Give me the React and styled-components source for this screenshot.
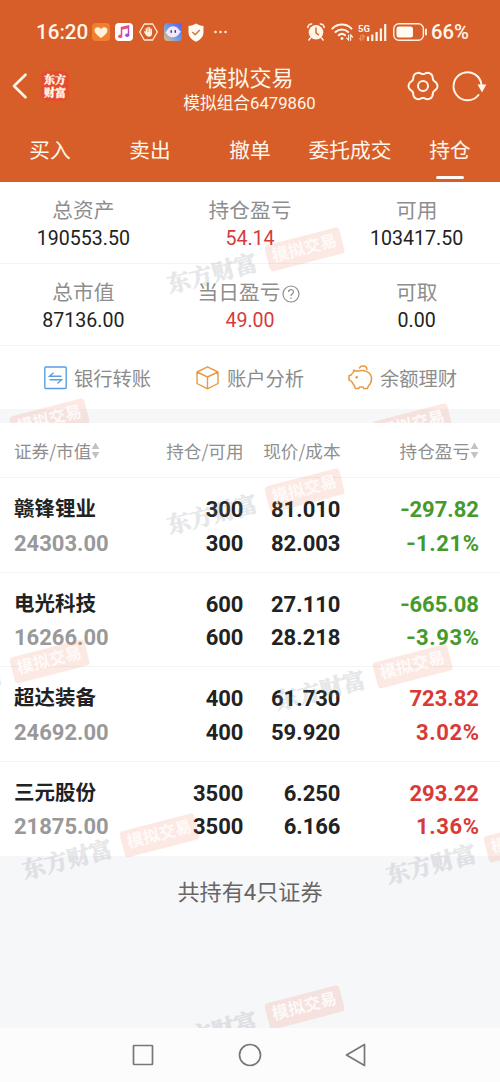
import React from "react";
import styled, { createGlobalStyle } from "styled-components";

const sans = `Roboto, "Noto Sans CJK SC", sans-serif`;

const GlobalStyle = createGlobalStyle`
  * { box-sizing: border-box; }
  body { margin: 0; background: #fff; }
`;

const Screen = styled.div`
  width: 500px;
  height: 1082px;
  display: flex;
  flex-direction: column;
  overflow: hidden;
  font-family: ${sans};
  color: #222;
  white-space: nowrap;
`;

const Header = styled.header`
  height: 182px;
  flex: none;
  display: flex;
  flex-direction: column;
  background: #d75e28;
  color: #fff6ea;
`;

const StatusBar = styled.div`
  height: 64px;
  padding: 0 33px 0 36px;
  display: flex;
  align-items: center;
  justify-content: space-between;
`;

const StatusGroup = styled.div`
  display: flex;
  align-items: center;
  gap: ${(p) => p.$gap}px;
`;

const StatusText = styled.span`
  font-size: ${(p) => p.$size}px;
  line-height: 24px;
  font-weight: 500;
  width: ${(p) => p.$width}px;
`;

const TitleBar = styled.div`
  height: 56px;
  padding: 0 14px 0 11px;
  display: grid;
  grid-template-columns: 90px 1fr 79px;
  align-items: center;
`;

const BrandSide = styled.div`
  display: flex;
  align-items: center;
  gap: 14px;
  padding-bottom: 13px;
`;

const Brand = styled.div`
  width: 28px;
  height: 30px;
  border-radius: 6px;
  background: #e54c2b;
  display: flex;
  flex-direction: column;
  align-items: center;
  justify-content: center;
  font: 900 11px/13px "Noto Serif CJK SC", "Noto Sans CJK SC", serif;
  -webkit-text-stroke: 0.3px currentColor;
`;

const Titles = styled.div`
  display: flex;
  flex-direction: column;
  align-items: center;
  padding: 0 9px 3px 0;
`;

const Title = styled.h1`
  margin: 0;
  font-size: 22px;
  line-height: 27px;
  font-weight: 400;
`;

const Subtitle = styled.div`
  font-size: 16.7px;
  line-height: 24px;
`;

const Tools = styled.div`
  display: flex;
  gap: 13px;
  padding-bottom: 13px;
`;

const Tabs = styled.nav`
  height: 62px;
  display: grid;
  grid-template-columns: repeat(5, 1fr);
`;

const Tab = styled.div`
  display: flex;
  flex-direction: column;
  align-items: center;
  padding-top: 15px;
  font-size: 20.7px;
  line-height: 32px;
  &::after {
    content: "";
    width: 28px;
    height: 3px;
    margin-top: 9px;
    border-radius: 2px;
    background: ${(p) => (p.$active ? "#fffaf3" : "transparent")};
  }
`;

const Summary = styled.section`
  position: relative;
  height: 241px;
  flex: none;
  overflow: hidden;
  background: #fff;
`;

const StatRow = styled.div`
  height: 82px;
  padding-top: 16px;
  display: grid;
  grid-template-columns: repeat(3, 1fr);
  border-bottom: 1px solid #f4f4f4;
`;

const Stat = styled.div`
  display: flex;
  flex-direction: column;
  align-items: center;
`;

const StatLabel = styled.div`
  display: flex;
  align-items: center;
  gap: 2px;
  font-size: 20.7px;
  line-height: 27px;
  color: #8e8e8e;
`;

const HelpIcon = styled.svg`
  display: block;
  margin-right: 2px;
`;

const StatValue = styled.div`
  font-size: 19.6px;
  line-height: 27px;
  color: ${(p) => (p.$red ? "#d23c3c" : "#222")};
`;

const Actions = styled.div`
  height: 63px;
  padding: 0 43px;
  display: flex;
  align-items: center;
  justify-content: space-between;
`;

const Action = styled.div`
  display: flex;
  align-items: center;
  gap: 7px;
  font-size: 19.3px;
  color: #8c8c8c;
`;

const Band = styled.div`
  height: 14px;
  background: #f6f7f9;
`;

const Holdings = styled.main`
  position: relative;
  flex: 1;
  overflow: hidden;
  background: #f6f7f9;
`;

const columns = "140px 89.5px 97px 138.500px";

const TableHead = styled.div`
  height: 55px;
  padding: 0 21px 0 14px;
  display: grid;
  grid-template-columns: ${columns};
  align-items: center;
  background: #fff;
  border-bottom: 1px solid #f4f4f4;
  font-family: "Noto Sans CJK SC", sans-serif;
  font-size: 17.6px;
  color: #8f8f8f;
`;

const HeadCell = styled.div`
  display: flex;
  align-items: center;
  justify-content: ${(p) => (p.$left ? "flex-start" : "flex-end")};
`;

const Row = styled.div`
  height: 94.5px;
  padding: 15px 21px 0 14px;
  display: grid;
  grid-template-columns: ${columns};
  background: #fff;
  border-bottom: 1px solid #f4f4f4;
  &:last-of-type { border-bottom: 0; }
`;

const Cell = styled.div`
  display: flex;
  flex-direction: column;
  align-items: ${(p) => (p.$left ? "flex-start" : "flex-end")};
  font-size: 22px;
  line-height: 33.5px;
  font-weight: 700;
  color: ${(p) => p.$color || "#222"};
`;

const StockName = styled.span`
  font-size: 20.5px;
  font-weight: 700;
`;

const MarketValue = styled.span`
  color: #999;
`;

const Count = styled.footer`
  padding-top: 20px;
  text-align: center;
  font-size: 22.1px;
  line-height: 32px;
  color: #666;
`;

const Mark = styled.div`
  position: absolute;
  left: ${(p) => p.$x}px;
  top: ${(p) => p.$y}px;
  width: 184px;
  height: 30px;
  margin: -15px 0 0 -145px;
  display: flex;
  align-items: center;
  justify-content: space-between;
  transform-origin: 145px 15px;
  transform: rotate(-14.5deg);
  pointer-events: none;
`;

const MarkName = styled.span`
  padding-left: 4px;
  font: 700 23px/30px "Noto Serif CJK SC", "Noto Sans CJK SC", serif;
  color: rgb(125, 130, 140);
  -webkit-text-stroke: 0.8px currentColor;
  opacity: 0.19;
`;

const MarkTag = styled.span`
  width: 77px;
  height: 27px;
  border-radius: 4px;
  background: rgba(240, 105, 65, 0.15);
  color: rgba(255, 255, 255, 0.82);
  font-size: 16.5px;
  line-height: 26px;
  font-weight: 700;
  text-align: center;
`;

const NavBar = styled.nav`
  height: 54px;
  flex: none;
  padding: 0 133px 0 132px;
  display: flex;
  align-items: center;
  justify-content: space-between;
  background: #fcfcfc;
`;

const Icon = styled.svg`
  display: block;
  flex: none;
  overflow: visible;
`;

const gearPath =
  Array.from({ length: 96 }, (_, i) => {
    const a = (i / 96) * Math.PI * 2;
    const r = 13.3 + 1.25 * Math.cos(6 * a) - 0.15 * Math.cos(12 * a);
    return `${i ? "L" : "M"}${(16 + r * Math.cos(a)).toFixed(2)} ${(16 + r * Math.sin(a)).toFixed(2)}`;
  }).join("") + "Z";

const Watermark = ({ x, y }) => (
  <Mark $x={x} $y={y}>
    <MarkName>东方财富</MarkName>
    <MarkTag>模拟交易</MarkTag>
  </Mark>
);

const Sort = () => (
  <Icon width="9" height="17" viewBox="0 0 9 17" fill="#c2c2c2">
    <path d="M4.5 .5 8.300 7H.7ZM4.5 16.500 .7 10h7.600Z" />
  </Icon>
);

const AppIcons = () => (
  <>
    <Icon width="18" height="18" viewBox="0 0 18 18">
      <rect width="18" height="18" rx="4" fill="#f08030" />
      <path d="M9 15C5 12 2.5 10 2.5 7.2 2.5 4 6.7 3 9 6c2.300-3 6.500-2 6.500 1.200C15.500 10 13 12 9 15Z" fill="#fff0d8" />
    </Icon>
    <Icon width="18" height="18" viewBox="0 0 18 18">
      <defs>
        <linearGradient id="note" x1="0" y1="0" x2="1" y2="1">
          <stop offset="0" stopColor="#f04a6a" />
          <stop offset="1" stopColor="#a04ae0" />
        </linearGradient>
      </defs>
      <rect width="18" height="18" rx="4" fill="#fff" />
      <path d="M6.500 13V4.500L13.500 3v9" fill="none" stroke="url(#note)" strokeWidth="1.500" />
      <path d="M6.500 5.800 13.500 4.300" stroke="#ee4d70" strokeWidth="2" />
      <ellipse cx="5.200" cy="13.400" rx="2.200" ry="1.800" fill="#f0577a" />
      <ellipse cx="12.200" cy="12.300" rx="2.200" ry="1.800" fill="#a44ce0" />
    </Icon>
    <Icon width="19" height="18" viewBox="0 0 19 18">
      <path d="M5.300 1h8.400l4.600 8-4.600 8H5.300L.7 9Z" fill="none" stroke="#ffeedb" strokeWidth="1.300" strokeLinejoin="round" />
      <path d="M7.300 10V5.700M9 9V4.500M10.700 9V5M12.300 10V6.500M5.700 8.800l1.900 3" fill="none" stroke="#ffeedb" strokeWidth="1.400" strokeLinecap="round" />
      <path d="M6.600 9h6.400v1.500c0 2-1.200 3.300-3 3.300s-2.500-1.300-3.400-2.800Z" fill="#ffeedb" />
    </Icon>
    <Icon width="18" height="18" viewBox="0 0 18 18">
      <defs>
        <linearGradient id="pal" x1="1" y1="0" x2="0" y2="1">
          <stop offset="0" stopColor="#6557e8" />
          <stop offset=".55" stopColor="#6c9ee8" />
          <stop offset="1" stopColor="#f5ba78" />
        </linearGradient>
      </defs>
      <rect width="18" height="18" rx="4" fill="url(#pal)" />
      <path d="M1.500 9.500C3.500 8 4 3.300 9 3.300S14.500 7.300 17 8.500C15.500 10 14 14.300 9 14.300S3.500 11.500 1.500 9.500Z" fill="#f1e8fc" />
      <path d="M7.200 7.800v1.500M11.300 7.800v1.500" stroke="#37395e" strokeWidth="1.400" strokeLinecap="round" />
    </Icon>
    <Icon width="18" height="19" viewBox="0 0 18 19">
      <path d="M9 .5c2.500 1.700 5 2.300 7.500 2.500v6c0 5-3.500 8-7.500 9.700C5 17 1.500 14 1.500 9V3C4 2.800 6.500 2.200 9 .5Z" fill="#fffaf2" />
      <path d="m5.300 9 2.800 2.800L12.800 7" fill="none" stroke="#c47a48" strokeWidth="1.400" />
    </Icon>
    <Icon width="18" height="4" viewBox="-3 0 18 4" fill="#ffe6cf">
      <circle cx="1.500" cy="2" r="1.300" /><circle cx="6.500" cy="2" r="1.300" /><circle cx="11.500" cy="2" r="1.300" />
    </Icon>
  </>
);

const SystemIcons = () => (
  <>
    <Icon width="18" height="18" viewBox="0 0 18 18">
      <circle cx="9" cy="9.300" r="7.300" fill="#fff6ea" />
      <path d="M.8 4.500C1 2.700 2.600 1 4.700.9M17.200 4.500C17 2.700 15.400 1 13.300.9M3.500 15l-1.700 2M14.500 15l1.700 2" fill="none" stroke="#fff6ea" strokeWidth="1.500" strokeLinecap="round" />
      <path d="M9 5v4.800l2.500 2" fill="none" stroke="#d75e28" strokeWidth="1.400" strokeLinecap="round" />
    </Icon>
    <Icon width="22" height="18" viewBox="0 0 22 18" fill="none" stroke="#fff6ea" strokeLinecap="round">
      <path d="M1.300 5.600c5.400-5.400 13.800-5.400 19.200 0M4.500 9c3.700-3.500 9-3.500 12.700 0M7.700 12.200c1.900-1.600 4.500-1.600 6.400 0" strokeWidth="2" />
      <circle cx="11" cy="15.500" r="1.400" fill="#fff6ea" stroke="none" />
      <path d="M17.600 12v5.200l-2-2.200M19.700 17.200V12l2 2.200" strokeWidth="1.100" />
    </Icon>
    <Icon width="29" height="19" viewBox="0 0 29 19">
      <text x="0" y="8.700" fontSize="9.500" fontWeight="700" fill="#fff6ea" fontFamily="Roboto">5G</text>
      <path d="M2.800 12v5.200l-1.800-2.200M5 17.200V12l1.800 2.200" fill="none" stroke="#ed9568" strokeWidth="1.100" />
      <path d="M10 18v-4.500M14.300 18v-6.500M18.600 18V9M22.900 18V5.500M27.200 18V1" stroke="#fff6ea" strokeWidth="2.200" />
    </Icon>
    <Icon width="33" height="18" viewBox="0 0 33 18">
      <rect x=".8" y=".8" width="29.600" height="16.400" rx="5" fill="none" stroke="#fff0df" strokeWidth="1.400" />
      <rect x="3.500" y="3.500" width="16.500" height="11" rx="2.500" fill="#fffaf2" />
      <path d="M33 6.500v5" stroke="#fff0df" strokeWidth="2" strokeLinecap="round" />
    </Icon>
  </>
);

const TransferIcon = () => (
  <Icon width="24" height="24" viewBox="0 0 24 24" fill="none" stroke="#5a9fe0" strokeWidth="1.400">
    <rect x="1.800" y="1" width="21.400" height="21.500" rx="1" />
    <path d="M18.500 10.300H6.500l4-3.600M6.500 13.800h12l-4 3.600" />
  </Icon>
);

const BoxIcon = () => (
  <Icon width="25" height="24" viewBox="0 0 25 24" fill="none" stroke="#e99a42" strokeWidth="1.400" strokeLinejoin="round">
    <path d="M12.500.8 23 6v11.500l-10.500 5.300L2 17.500V6ZM2 6l10.500 5L23 6M12.500 11v11.800" />
  </Icon>
);

const PigIcon = () => (
  <Icon width="25" height="25" viewBox="0 0 25 25" fill="none" stroke="#e99a42" strokeWidth="1.500" strokeLinejoin="round" strokeLinecap="round">
    <path d="M5.500 5.200 9 6.300C12 5.400 15.500 5 18.500 6.400c3.500 1.600 5.200 4.600 5 8-.2 3.200-1.400 5.200-3.200 6.600l-.8 2.600h-3.700l-.8-1.600h-3.500l-.8 1.600H7.300l-1-3.300c-1.400-1-2.200-2.500-2.700-4L1 15v-4.300l2.500-1C4 8.300 5 7.500 5.700 7ZM11.500 3c1.200-1.800 4-2.800 6-1.500 1.100.7 1.500 1.700 1.500 2.700" />
    <circle cx="8.700" cy="12.200" r="1.300" fill="#e99a42" stroke="none" />
  </Icon>
);

const stats = [
  [["总资产", "190553.50"], ["持仓盈亏", "54.14", true], ["可用", "103417.50"]],
  [["总市值", "87136.00"], ["当日盈亏", "49.00", true, true], ["可取", "0.00"]],
];

const green = "#459a2b";
const red = "#d93a35";

const stocks = [
  ["赣锋锂业", "24303.00", "300", "81.010", "82.003", "-297.82", "-1.21%", green],
  ["电光科技", "16266.00", "600", "27.110", "28.218", "-665.08", "-3.93%", green],
  ["超达装备", "24692.00", "400", "61.730", "59.920", "723.82", "3.02%", red],
  ["三元股份", "21875.00", "3500", "6.250", "6.166", "293.22", "1.36%", red],
];

const AmountText = styled.span`
  display: flex;
  align-items: baseline;
  letter-spacing: ${(p) => (p.$percent ? 0.6 : 0)}px;
  margin-right: ${(p) => (p.$percent ? -0.6 : 0)}px;
`;

const Sign = styled.span`
  width: 10px;
  letter-spacing: 0;
  transform: scaleX(1.15);
  transform-origin: left;
`;

const Amount = ({ value }) => (
  <AmountText $percent={value.endsWith("%")}>
    {value.startsWith("-") && <Sign>-</Sign>}
    {value.replace("-", "")}
  </AmountText>
);

export default function App() {
  return (
    <Screen>
      <GlobalStyle />
      <Header>
        <StatusBar>
          <StatusGroup $gap={5.7}>
            <StatusText $size={20.6} $width={50}>16:20</StatusText>
            <AppIcons />
          </StatusGroup>
          <StatusGroup $gap={5.5}>
            <SystemIcons />
            <StatusText $size={20.3} $width={36}>66%</StatusText>
          </StatusGroup>
        </StatusBar>
        <TitleBar>
          <BrandSide>
            <Icon width="16" height="26" viewBox="0 0 16 26" fill="none" stroke="#fff6ea" strokeWidth="2.600" strokeLinecap="round" strokeLinejoin="round">
              <path d="M14.500 1.700 3 13l11.500 11.300" />
            </Icon>
            <Brand>
              <span>东方</span>
              <span>财富</span>
            </Brand>
          </BrandSide>
          <Titles>
            <Title>模拟交易</Title>
            <Subtitle>模拟组合6479860</Subtitle>
          </Titles>
          <Tools>
            <Icon width="32" height="32" viewBox="0 0 32 32" fill="none" stroke="#fff6ea" strokeWidth="2">
              <path d={gearPath} strokeLinejoin="round" />
              <circle cx="16" cy="16" r="5" />
            </Icon>
            <Icon width="34" height="32" viewBox="0 0 34 32" fill="none" stroke="#fff6ea" strokeWidth="2">
              <path d="M26.500 25A14 14 0 1 1 29.500 15" strokeLinecap="round" />
              <path d="M25.500 14.500h8.800L30 22.500Z" fill="#fff6ea" stroke="none" />
            </Icon>
          </Tools>
        </TitleBar>
        <Tabs>
          {["买入", "卖出", "撤单", "委托成交", "持仓"].map((t) => (
            <Tab key={t} $active={t === "持仓"}>{t}</Tab>
          ))}
        </Tabs>
      </Header>

      <Summary>
        {stats.map((row, i) => (
          <StatRow key={i}>
            {row.map(([label, value, isRed, help]) => (
              <Stat key={label}>
                <StatLabel>
                  {label}
                  {help && (
                    <HelpIcon width="18" height="18" viewBox="0 0 18 18" fill="none" stroke="#8e8e8e" strokeWidth="1.200">
                      <circle cx="9" cy="9" r="8" />
                      <path d="M6.500 7c0-3.300 5-3.200 5-.2 0 1.900-2.500 2-2.500 4.200M9 12.500V14" />
                    </HelpIcon>
                  )}
                </StatLabel>
                <StatValue $red={isRed}>{value}</StatValue>
              </Stat>
            ))}
          </StatRow>
        ))}
        <Actions>
          <Action><TransferIcon />银行转账</Action>
          <Action><BoxIcon />账户分析</Action>
          <Action><PigIcon />余额理财</Action>
        </Actions>
        <Band />
        <Watermark x={304} y={67} />
        <Watermark x={49} y={238} />
        <Watermark x={412} y={243} />
      </Summary>

      <Holdings>
        <TableHead>
          <HeadCell $left>证券/市值<Sort /></HeadCell>
          <HeadCell>持仓/可用</HeadCell>
          <HeadCell>现价/成本</HeadCell>
          <HeadCell>持仓盈亏<Sort /></HeadCell>
        </TableHead>
        <section>
          {stocks.map(([name, worth, qty, price, cost, gain, rate, color]) => (
            <Row key={name}>
              <Cell $left>
                <StockName>{name}</StockName>
                <MarketValue>{worth}</MarketValue>
              </Cell>
              <Cell><span>{qty}</span><span>{qty}</span></Cell>
              <Cell><span>{price}</span><span>{cost}</span></Cell>
              <Cell $color={color}><Amount value={gain} /><Amount value={rate} /></Cell>
            </Row>
          ))}
        </section>
        <Count>共持有4只证券</Count>
        <Watermark x={304} y={67} />
        <Watermark x={49} y={238} />
        <Watermark x={412} y={243} />
        <Watermark x={159} y={412} />
        <Watermark x={523} y={417} />
        <Watermark x={304} y={584} />
      </Holdings>

      <NavBar>
        <Icon width="22" height="22" viewBox="0 0 22 22" fill="none" stroke="#777" strokeWidth="1.700">
          <rect x="1.500" y="1.500" width="19" height="19" rx=".6" />
        </Icon>
        <Icon width="24" height="24" viewBox="0 0 24 24" fill="none" stroke="#777" strokeWidth="1.700">
          <circle cx="12" cy="12" r="10.500" />
        </Icon>
        <Icon width="22" height="24" viewBox="0 0 22 24" fill="none" stroke="#777" strokeWidth="1.700" strokeLinejoin="round">
          <path d="M19.500 1.500v21L1.500 12Z" />
        </Icon>
      </NavBar>
    </Screen>
  );
}
